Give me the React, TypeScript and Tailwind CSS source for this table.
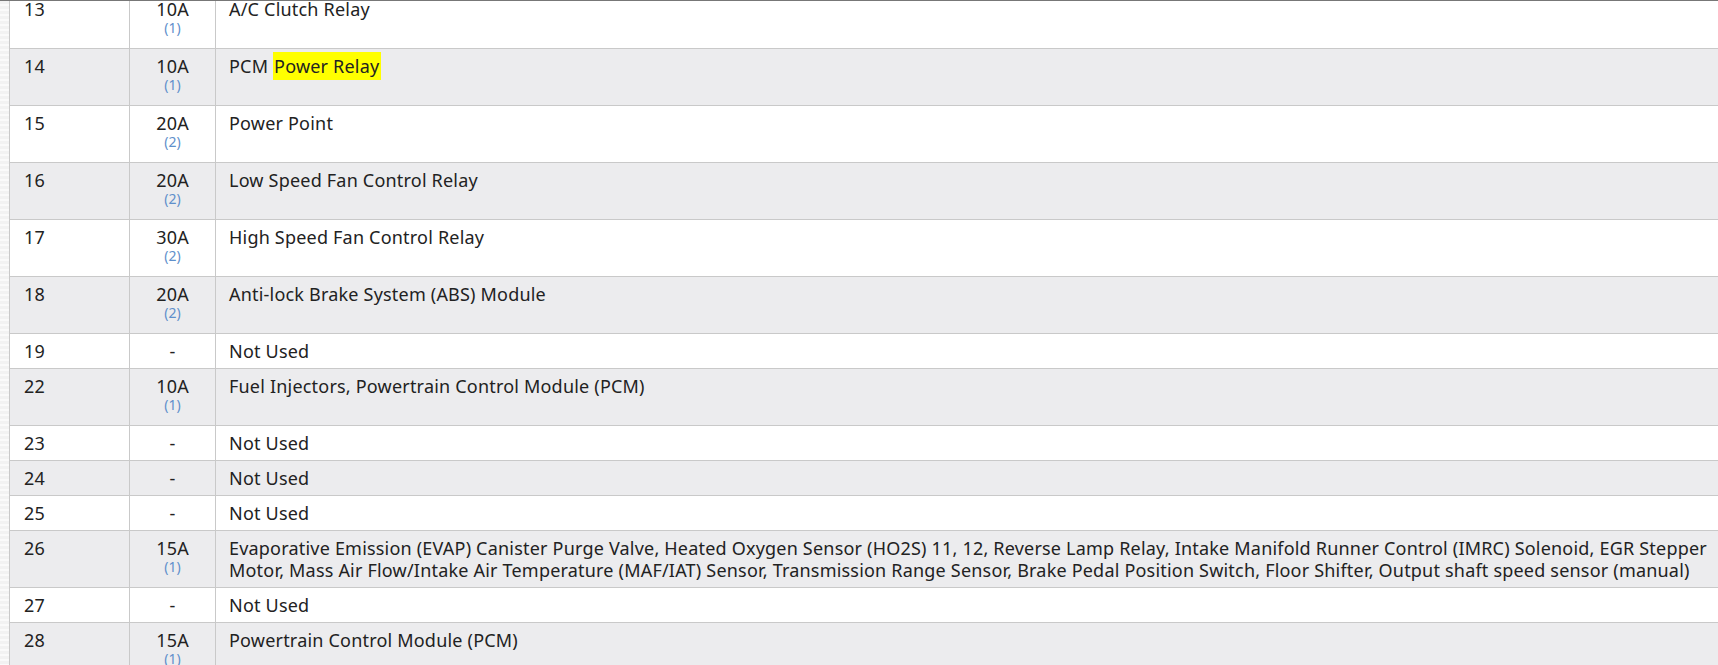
import React from "react";

type Row = { n: string; amp: string; note?: string; desc: React.ReactNode; grey: boolean; lines?: string[] };

const rows: Row[] = [
  { n: "13", amp: "10A", note: "(1)", desc: "A/C Clutch Relay", grey: false },
  {
    n: "14",
    amp: "10A",
    note: "(1)",
    desc: (
      <>
        PCM <span className="bg-[#ffff00] py-[2px] pl-px pr-[2px]">Power Relay</span>
      </>
    ),
    grey: true,
  },
  { n: "15", amp: "20A", note: "(2)", desc: "Power Point", grey: false },
  { n: "16", amp: "20A", note: "(2)", desc: "Low Speed Fan Control Relay", grey: true },
  { n: "17", amp: "30A", note: "(2)", desc: "High Speed Fan Control Relay", grey: false },
  { n: "18", amp: "20A", note: "(2)", desc: "Anti-lock Brake System (ABS) Module", grey: true },
  { n: "19", amp: "-", desc: "Not Used", grey: false },
  { n: "22", amp: "10A", note: "(1)", desc: "Fuel Injectors, Powertrain Control Module (PCM)", grey: true },
  { n: "23", amp: "-", desc: "Not Used", grey: false },
  { n: "24", amp: "-", desc: "Not Used", grey: true },
  { n: "25", amp: "-", desc: "Not Used", grey: false },
  {
    n: "26",
    amp: "15A",
    note: "(1)",
    desc: null,
    lines: [
      "Evaporative Emission (EVAP) Canister Purge Valve, Heated Oxygen Sensor (HO2S) 11, 12, Reverse Lamp Relay, Intake Manifold Runner Control (IMRC) Solenoid, EGR Stepper",
      "Motor, Mass Air Flow/Intake Air Temperature (MAF/IAT) Sensor, Transmission Range Sensor, Brake Pedal Position Switch, Floor Shifter, Output shaft speed sensor (manual)",
    ],
    grey: true,
  },
  { n: "27", amp: "-", desc: "Not Used", grey: false },
  { n: "28", amp: "15A", note: "(1)", desc: "Powertrain Control Module (PCM)", grey: true },
];

export default function App() {
  return (
    <div
      className="w-[1718px] h-[665px] overflow-hidden bg-white border-t border-[#777777] flex text-[#222222] text-[18px] leading-[22px] tracking-[0.2px]"
      style={{ fontFamily: '"Noto Sans", "Open Sans", sans-serif' }}
    >
      <div className="w-[9px] shrink-0 bg-[repeating-linear-gradient(180deg,#f2f2f2_0px,#f2f2f2_3px,#fafafa_3px,#fafafa_5px)]" />
      <div className="flex-1 overflow-hidden">
        <div className="-mt-[9px] flex flex-col">
          {rows.map((r) => (
            <div
              key={r.n}
              className={`flex border-b border-[#c9c9c9] ${r.grey ? "bg-[#ececee]" : "bg-white"}`}
            >
              <div className="w-[120px] shrink-0 border-l border-[#c9c9c9] pl-[14px] pt-[6px] pb-[6px]">{r.n}</div>
              <div className="w-[86px] shrink-0 border-l border-[#c9c9c9] pt-[6px] pb-[6px] flex flex-col items-center">
                <div>{r.amp}</div>
                {r.note && (
                  <div className="text-[14px] leading-[15px] tracking-normal mb-[7px] text-[#5f8fcb]">{r.note}</div>
                )}
              </div>
              <div className="flex-1 min-w-0 border-l border-[#c9c9c9] pl-[13px] pt-[6px] pb-[6px]">
                {r.lines ? (
                  r.lines.map((l) => (
                    <div key={l} className="whitespace-nowrap">
                      {l}
                    </div>
                  ))
                ) : (
                  <div className="whitespace-nowrap">{r.desc}</div>
                )}
              </div>
            </div>
          ))}
        </div>
      </div>
    </div>
  );
}
